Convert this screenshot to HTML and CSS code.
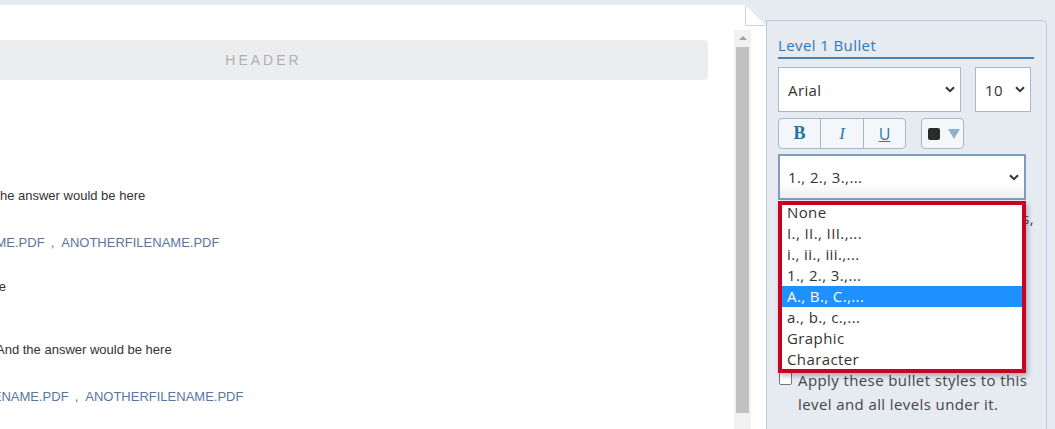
FILE: index.html
```html
<!DOCTYPE html>
<html lang="en">
<head>
    <meta charset="UTF-8">
    <meta name="viewport" content="width=device-width, initial-scale=1.0">
    <title>Bullet Styles</title>
    <link rel="stylesheet" href="styles.css">
</head>
<body>
    <div class="app">
        <!-- Document preview -->
        <div class="doc">
            <svg class="fold" width="21" height="21" viewBox="0 0 21 21">
                <path d="M0 0 L21 21 L0 21 Z" fill="#ffffff"/>
                <path d="M0.5 0 L0.5 20.5 L21 20.5" fill="none" stroke="#cfd2d6" stroke-width="1"/>
            </svg>
            <div class="doc-main">
                <div class="doc-body">
                    <div class="doc-header">HEADER</div>

                    <div class="qa qa-first">
                        <div class="line q">First question?</div>
                        <div class="line a">The answer would be here</div>
                        <div class="line files">
                            <span class="file">FILENAME.PDF</span><span class="sep">,</span><span class="file">ANOTHERFILENAME.PDF</span>
                        </div>
                    </div>

                    <div class="qa qa-second">
                        <div class="line q"><span>This is where the question would be</span></div>
                        <div class="line a">And the answer would be here</div>
                        <div class="line files">
                            <span class="file">FILENAME.PDF</span><span class="sep">,</span><span class="file">ANOTHERFILENAME.PDF</span>
                        </div>
                    </div>
                </div>
            </div>
            <div class="scrollbar">
                <div class="scroll-up"></div>
                <div class="scroll-thumb"></div>
            </div>
        </div>

        <!-- Bullet settings panel -->
        <aside class="panel">
            <div class="panel-title">Level 1 Bullet</div>

            <div class="font-row">
                <div class="select select-font">
                    <span>Arial</span>
                    <svg class="chevron" width="10" height="7" viewBox="0 0 10 7"><path d="M1 1.2 L5 5.2 L9 1.2" fill="none" stroke="#333" stroke-width="2"/></svg>
                </div>
                <div class="select select-size">
                    <span>10</span>
                    <svg class="chevron" width="10" height="7" viewBox="0 0 10 7"><path d="M1 1.2 L5 5.2 L9 1.2" fill="none" stroke="#333" stroke-width="2"/></svg>
                </div>
            </div>

            <div class="format-row">
                <div class="btn-group">
                    <button class="fmt-btn fmt-bold">B</button>
                    <button class="fmt-btn fmt-italic">I</button>
                    <button class="fmt-btn fmt-underline">U</button>
                </div>
                <button class="color-btn">
                    <span class="swatch"></span>
                    <svg width="12" height="10" viewBox="0 0 12 10"><path d="M0 0 L12 0 L6 10 Z" fill="#8eb0d1"/></svg>
                </button>
            </div>

            <div class="select select-style">
                <span>1., 2., 3.,...</span>
                <svg class="chevron" width="10" height="7" viewBox="0 0 10 7"><path d="M1 1.2 L5 5.2 L9 1.2" fill="none" stroke="#333" stroke-width="2"/></svg>
            </div>

            <div class="style-note"><span>Choose one of the list styles,</span></div>

            <ul class="style-list">
                <li>None</li>
                <li>I., II., III.,...</li>
                <li>i., ii., iii.,...</li>
                <li>1., 2., 3.,...</li>
                <li class="active">A., B., C.,...</li>
                <li>a., b., c.,...</li>
                <li>Graphic</li>
                <li>Character</li>
            </ul>

            <label class="apply-row">
                <input type="checkbox" class="apply-check">
                <span>Apply these bullet styles to this level and all levels under it.</span>
            </label>
        </aside>
    </div>
</body>
</html>
```

FILE: styles.css
```css
/* Page */
body {
    margin: 0;
    padding: 0;
    background-color: #e5ebf1;
    font-family: 'Liberation Sans', Arial, sans-serif;
    color: #333;
    overflow: hidden;
}

.app {
    display: flex;
    height: 100vh;
    overflow: hidden;
}

/* Document preview */
.doc {
    position: relative;
    flex: 0 0 766px;
    margin-top: 5px;
    background-color: #fff;
    display: flex;
    clip-path: polygon(0 0, 745px 0, 766px 21px, 766px 100%, 0 100%);
}

.fold {
    position: absolute;
    top: 0;
    left: 745px;
}

.doc-main {
    width: 734px;
    overflow: hidden;
    padding-top: 35px;
}

.doc-body {
    margin-left: -184px;
    width: 892px;
}

.doc-header {
    height: 40px;
    background-color: #ecedef;
    border-radius: 4px;
    display: flex;
    align-items: center;
    justify-content: center;
    color: #b0b0b0;
    font-size: 14px;
    letter-spacing: 3px;
    padding-left: 3px;
}

.line {
    height: 20px;
    line-height: 20px;
    font-size: 13px;
    white-space: nowrap;
}

.qa-first {
    margin-top: 43px;
}

.qa-second {
    margin-top: 24px;
}

.a {
    margin-top: 43px;
}

.files {
    margin-top: 27px;
    color: #5876a0;
}

.sep {
    margin: 0 7px 0 6px;
}

.qa-first .a {
    padding-left: 176px;
}

.qa-first .files {
    padding-left: 134px;
}

.qa-second .q {
    display: flex;
    justify-content: flex-end;
    width: 190px;
}

.qa-second .a {
    padding-left: 180px;
}

.qa-second .files {
    padding-left: 158px;
}

/* Scrollbar */
.scrollbar {
    width: 17px;
    margin-top: 25px;
    background-color: #f1f1f1;
    display: flex;
    flex-direction: column;
}

.scroll-up {
    height: 17px;
    position: relative;
}

.scroll-up::after {
    content: '';
    position: absolute;
    left: 5px;
    top: 6px;
    border-left: 4px solid transparent;
    border-right: 4px solid transparent;
    border-bottom: 4px solid #a3a3a3;
}

.scroll-thumb {
    height: 366px;
    margin: 0 2px;
    background-color: #c1c1c1;
}

/* Settings panel */
.panel {
    position: relative;
    box-sizing: border-box;
    width: 281px;
    margin-top: 20px;
    border: 1px solid #b8cbde;
    border-bottom: none;
    border-radius: 0 5px 0 0;
    padding: 14px 11px 0 11px;
    font-family: 'Open Sans', sans-serif;
    font-size: 15px;
    letter-spacing: 0.4px;
    color: #333;
}

.panel-title {
    line-height: 20px;
    color: #2f78b5;
    padding-bottom: 2px;
    border-bottom: 2px solid #4682b4;
    margin-right: 1px;
}

.font-row {
    display: flex;
    gap: 14px;
    margin-top: 8px;
}

.select {
    box-sizing: border-box;
    height: 45px;
    background-color: #fff;
    border: 1px solid #a9b8c8;
    display: flex;
    align-items: center;
    justify-content: space-between;
    padding: 0 5px 0 9px;
}

.select-font {
    width: 183px;
}

.select-size {
    width: 56px;
}

.format-row {
    display: flex;
    gap: 15px;
    margin-top: 6px;
}

.btn-group {
    display: flex;
    border: 1px solid #a2b8cf;
    border-radius: 4px;
    overflow: hidden;
    background-color: #f4f7fa;
}

.fmt-btn {
    box-sizing: border-box;
    width: 43px;
    height: 29px;
    border: none;
    border-left: 1px solid #a2b8cf;
    background: transparent;
    color: #2a79ad;
    font-size: 17px;
    padding: 0;
    cursor: pointer;
}

.fmt-btn:first-child {
    border-left: none;
    width: 41px;
}

.fmt-btn:last-child {
    width: 42px;
}

.fmt-bold {
    font-family: 'Liberation Serif', serif;
    font-weight: bold;
    font-size: 18px;
    color: #1f739f;
}

.fmt-italic {
    font-family: 'Liberation Serif', serif;
    font-style: italic;
}

.fmt-underline {
    font-family: 'Open Sans', sans-serif;
    font-size: 16px;
    text-decoration: underline;
}

.color-btn {
    box-sizing: border-box;
    width: 43px;
    height: 31px;
    border: 1px solid #a2b8cf;
    border-radius: 4px;
    background-color: #f4f7fa;
    display: flex;
    align-items: center;
    gap: 8px;
    padding: 0 0 0 6px;
}

.swatch {
    width: 12px;
    height: 12px;
    border-radius: 2px;
    background-color: #2b2b2b;
}

.select-style {
    width: 248px;
    height: 46px;
    margin-top: 5px;
    border: 2px solid #7d9dbd;
    padding: 0 5px 0 8px;
    background: linear-gradient(#fff 65%, #eceef0);
}

.style-note {
    display: flex;
    justify-content: flex-end;
    height: 22px;
    line-height: 22px;
    margin-top: 7px;
    padding-right: 1px;
    white-space: nowrap;
    color: #444;
}

/* Open dropdown */
.style-list {
    position: absolute;
    top: 180px;
    left: 11px;
    box-sizing: border-box;
    width: 248px;
    height: 172px;
    margin: 0;
    padding: 1px 0 3px;
    list-style: none;
    background-color: #fff;
    outline: 4px solid #cc0022;
    outline-offset: -4px;
    box-shadow: 2px 3px 5px rgba(0, 0, 0, 0.25);
    overflow: hidden;
}

.style-list li {
    height: 21px;
    line-height: 21px;
    margin: 0 4px;
    padding-left: 5px;
}

.style-list li.active {
    background-color: #1e90ff;
    color: #fff;
}

.apply-row {
    display: flex;
    gap: 6px;
    margin-top: 139px;
    line-height: 24px;
    color: #454545;
}

.apply-check {
    appearance: none;
    flex: 0 0 13px;
    width: 13px;
    height: 13px;
    margin: 4px 0 0 1px;
    border: 1px solid #767676;
    border-radius: 2px;
    background-color: #fff;
}
```
